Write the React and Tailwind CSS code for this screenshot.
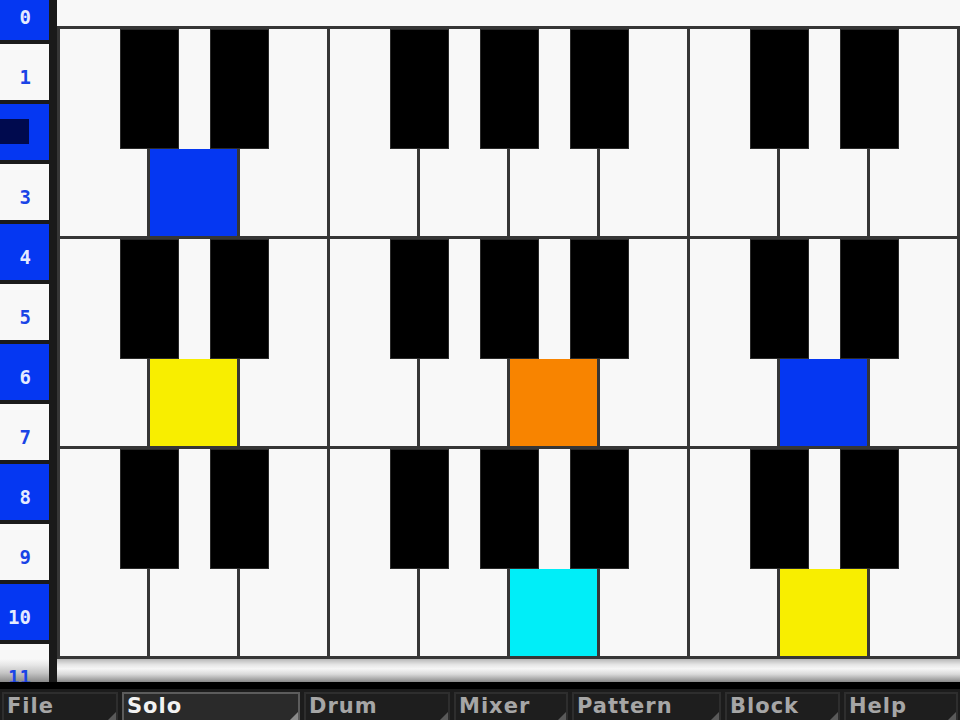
import React from 'react';

const BLUE = '#0537f2';

// white key index -> lower-half colour, per piano row
const pianoRows = [
  { 1: 'bg-[#0537f2]' },
  { 1: 'bg-[#f8ee00]', 5: 'bg-[#f88400]', 8: 'bg-[#0537f2]' },
  { 5: 'bg-[#00eef8]', 8: 'bg-[#f8ee00]' },
];

// black keys sit on these white key boundaries
const blackAt = [1, 2, 4, 5, 6, 8, 9];

const tabs = [
  { name: 'File', w: 'w-[116px]' },
  { name: 'Solo', w: 'w-[178px]', active: true },
  { name: 'Drum', w: 'w-[146px]' },
  { name: 'Mixer', w: 'w-[114px]' },
  { name: 'Pattern', w: 'w-[149px]' },
  { name: 'Block', w: 'w-[115px]' },
  { name: 'Help', w: 'w-[114px]' },
];

const pixelFont = { fontFamily: '"DejaVu Sans Mono", "Liberation Mono", monospace' };
const tabFont = { fontFamily: '"DejaVu Sans", "Liberation Sans", sans-serif' };

function RowLabel({ n }) {
  const blue = n % 2 === 0;
  const last = n === 11;
  let bg = blue ? 'bg-[#0537f2]' : 'bg-[#f8f8f8]';
  if (last) bg = 'bg-[linear-gradient(to_bottom,#f8f8f8_0px,#f8f8f8_15px,#e6e6e6_21px,#c4c4c4_29px,#8a8a8a_38px)]';
  return (
    <div className={`h-[60px] shrink-0 border-b-[4px] border-[#1a1a1a] flex ${bg}`}>
      {n === 2 ? (
        <div className="mt-[15px] h-[25px] w-[29px] bg-[#000a4e]" />
      ) : (
        <div
          className={`flex-1 flex items-center justify-end pr-[18px] pt-[10px] text-[19px] font-bold leading-none ${blue ? 'text-[#e4eaff]' : 'text-[#1a44e6]'}`}
          style={pixelFont}
        >
          {n}
        </div>
      )}
    </div>
  );
}

function PianoRow({ colors }) {
  return (
    <div className="relative h-[207px] flex border-r-[3px] border-[#363636]">
      {Array.from({ length: 10 }).map((_, i) => (
        <div key={i} className="w-[90px] h-full border-l-[3px] border-[#363636] flex flex-col bg-[#f8f8f8]">
          <div className="h-[120px]" />
          <div className={`flex-1 ${colors[i] || ''}`} />
        </div>
      ))}
      {blackAt.map((k) => (
        <div
          key={k}
          className="absolute top-0 h-[120px] w-[59px] bg-black border border-[#2a2a2a]"
          style={{ left: 90 * k - 27 }}
        />
      ))}
    </div>
  );
}

export default function App() {
  return (
    <div className="w-[960px] h-[720px] bg-black flex flex-col overflow-hidden">
      <div className="h-[682px] flex">
        {/* row numbers */}
        <div className="w-[49px] h-full overflow-hidden">
          <div className="mt-[-16px] flex flex-col">
            {Array.from({ length: 12 }).map((_, n) => (
              <RowLabel key={n} n={n} />
            ))}
          </div>
        </div>
        <div className="w-[8px] h-full bg-[#1a1a1a]" />

        {/* keyboard grid */}
        <div className="w-[903px] h-full flex flex-col bg-[#f8f8f8]">
          <div className="h-[26px] bg-[#f8f8f8]" />
          <div className="h-[3px] bg-[#363636]" />
          <PianoRow colors={pianoRows[0]} />
          <div className="h-[3px] bg-[#363636]" />
          <PianoRow colors={pianoRows[1]} />
          <div className="h-[3px] bg-[#363636]" />
          <PianoRow colors={pianoRows[2]} />
          <div className="h-[3px] bg-[#363636]" />
          <div className="flex-1 bg-[linear-gradient(to_bottom,#b8b8b8,#e6e6e6_25%,#f6f6f6_42%,#dadada_66%,#8a8a8a)]" />
        </div>
      </div>

      {/* menu bar */}
      <div className="mt-[7px] flex-1 bg-[#1c1c1c] flex items-end gap-[4px] pl-[2px]">
        {tabs.map((t) => (
          <div
            key={t.name}
            className={`relative ${t.w} h-[28px] border-[2px] border-b-0 pl-[3px] flex items-start pt-[2px] ${
              t.active ? 'bg-[#2a2a2a] border-[#5c5c5c] text-[#f2f2f2]' : 'bg-[#1e1e1e] border-[#2e2e2e] text-[#a6a6a6]'
            }`}
          >
            <span className="text-[21px] font-bold leading-none tracking-[1px]" style={tabFont}>
              {t.name}
            </span>
            <svg className="absolute bottom-0 right-0" width="8" height="8" viewBox="0 0 8 8">
              <polygon points="8,0 8,8 0,8" fill={t.active ? '#8a8a8a' : '#5a5a5a'} />
            </svg>
          </div>
        ))}
      </div>
    </div>
  );
}
